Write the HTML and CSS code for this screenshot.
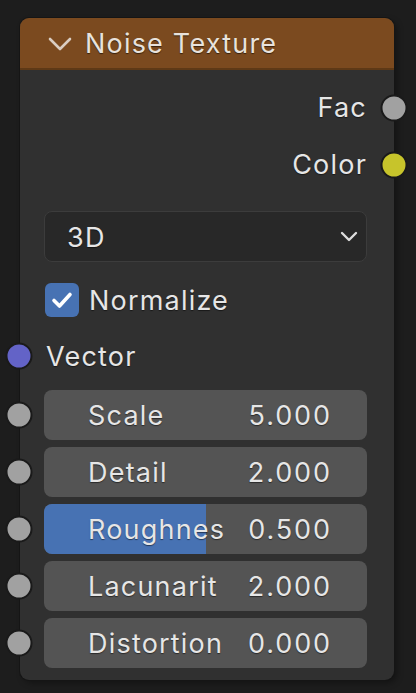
FILE: index.html
```html
<!DOCTYPE html>
<html>
<head>
<meta charset="utf-8">
<link rel="stylesheet" href="styles.css">
</head>
<body>
<div class="node">
  <div class="header">
    <svg class="collapse" width="24" height="14" viewBox="0 0 24 14"><path d="M2 2 L12 12 L22 2" fill="none" stroke="#d9cdc2" stroke-width="2.6" stroke-linecap="round" stroke-linejoin="round"/></svg>
    <span class="title">Noise Texture</span>
  </div>
  <div class="body">
    <div class="out-row"><span class="label">Fac</span><span class="socket right gray"></span></div>
    <div class="out-row"><span class="label">Color</span><span class="socket right yellow"></span></div>
    <div class="dropdown">
      <span class="label">3D</span>
      <svg width="18" height="11" viewBox="0 0 18 11"><path d="M2 2 L9 9 L16 2" fill="none" stroke="#dddddd" stroke-width="2.4" stroke-linecap="round" stroke-linejoin="round"/></svg>
    </div>
    <div class="check-row">
      <span class="checkbox"><svg width="34" height="34" viewBox="0 0 34 34"><path d="M9 17.5 L14.5 23 L25 11.5" fill="none" stroke="#ffffff" stroke-width="3.6" stroke-linecap="round" stroke-linejoin="round"/></svg></span>
      <span class="label">Normalize</span>
    </div>
    <div class="in-row"><span class="socket left purple"></span><span class="label">Vector</span></div>
    <div class="sliders">
      <div class="slider"><span class="socket left gray"></span><span class="label">Scale</span><span class="value">5.000</span></div>
      <div class="slider"><span class="socket left gray"></span><span class="label">Detail</span><span class="value">2.000</span></div>
      <div class="slider"><span class="socket left gray"></span><span class="fill" style="width: 50%"></span><span class="label">Roughnes</span><span class="value">0.500</span></div>
      <div class="slider"><span class="socket left gray"></span><span class="label">Lacunarit</span><span class="value">2.000</span></div>
      <div class="slider"><span class="socket left gray"></span><span class="label">Distortion</span><span class="value">0.000</span></div>
    </div>
  </div>
</div>
</body>
</html>
```
FILE: styles.css
```css
html, body {
  margin: 0;
  padding: 0;
  background: #1d1d1d;
  width: 416px;
  height: 693px;
  overflow: hidden;
}
body {
  font-family: Inter, "Noto Sans", sans-serif;
  font-size: 27px;
  letter-spacing: 1.2px;
  color: #e6e6e6;
  padding-top: 18px;
  padding-left: 20px;
  box-sizing: border-box;
}
.node {
  width: 374px;
  height: 662px;
  background: #303030;
  border-radius: 9px;
  box-shadow: 0 0 0 1px #151515, 3px 3px 6px rgba(0,0,0,0.35);
  position: relative;
}
.header {
  height: 50px;
  background: #7b4a1f;
  border-bottom: 2px solid #5e3916;
  border-radius: 9px 9px 0 0;
  display: flex;
  align-items: center;
  padding-left: 28px;
  gap: 13px;
}
.collapse {
  margin-top: 1px;
}
.title {
  color: #e8e2dc;
  text-shadow: 0 1px 1px rgba(0,0,0,0.55);
  line-height: 1;
}
.body {
  padding: 9px 27px 12px 24px;
  display: flex;
  flex-direction: column;
}
.label, .value {
  text-shadow: 0 1px 1px rgba(0,0,0,0.5);
  line-height: 1;
  white-space: nowrap;
}
.value {
  letter-spacing: 1.9px;
}
.out-row {
  height: 57px;
  display: flex;
  align-items: center;
  justify-content: flex-end;
  padding-right: 0;
  position: relative;
}
.socket {
  position: absolute;
  width: 23px;
  height: 23px;
  border-radius: 50%;
  border: 2px solid #1a1a1a;
  top: 50%;
  transform: translate(-50%, -50%);
}
.socket.right { left: calc(100% + 27px); }
.socket.left { left: -25px; }
.gray { background: #a1a1a1; }
.yellow { background: #c7c42b; }
.purple { background: #6363c7; }
.dropdown {
  margin-top: 18px;
  height: 49px;
  border: 1px solid #3c3c3c;
  border-radius: 8px;
  background: #282828;
  display: flex;
  align-items: center;
  justify-content: space-between;
  padding: 0 8px 0 22px;
}
.dropdown .label { margin-top: 1px; }
.check-row {
  margin-top: 21px;
  height: 34px;
  display: flex;
  align-items: center;
  gap: 10px;
  padding-left: 1px;
}
.checkbox {
  width: 34px;
  height: 34px;
  border-radius: 6px;
  background: #4772b3;
  display: block;
}
.checkbox svg { display: block; }
.in-row {
  margin-top: 22px;
  height: 34px;
  display: flex;
  align-items: center;
  position: relative;
  padding-left: 2px;
}
.sliders {
  margin-top: 17px;
  display: flex;
  flex-direction: column;
  gap: 7px;
}
.slider {
  height: 50px;
  border-radius: 8px;
  background: #545454;
  display: flex;
  align-items: center;
  justify-content: space-between;
  padding: 0 35px 0 44px;
  position: relative;
}
.slider .label, .slider .value { position: relative; }
.fill {
  position: absolute;
  left: 0;
  top: 0;
  bottom: 0;
  background: #4772b3;
  border-radius: 8px 0 0 8px;
}
.slider .socket.left { left: -25px; }
```
